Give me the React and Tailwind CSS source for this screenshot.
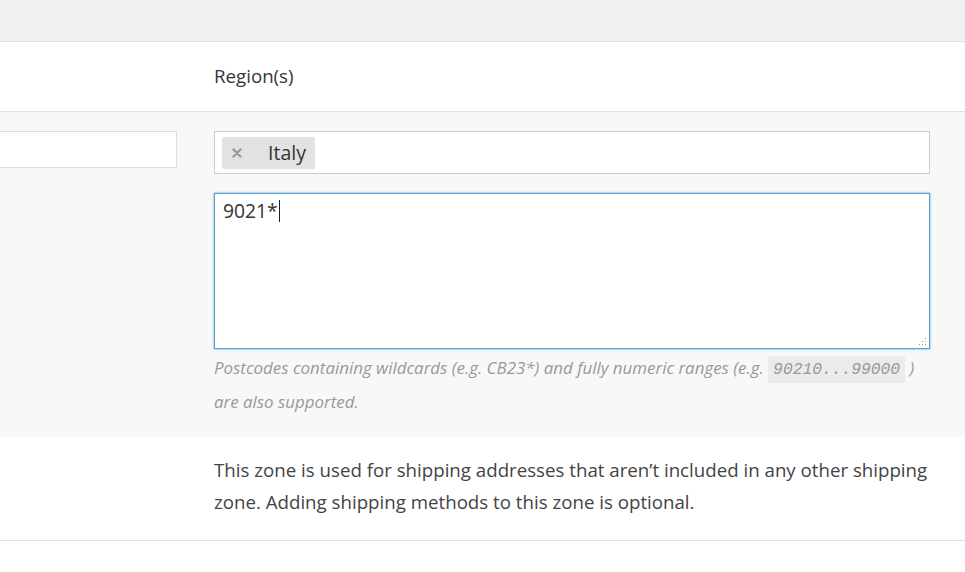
import React from 'react';

const font = { fontFamily: '"Open Sans", "Noto Sans", sans-serif' };

// little dotted grip in the textarea corner
const Grip = () => (
  <svg width="8" height="8" viewBox="0 0 8 8" className="absolute right-[2px] bottom-[2px]">
    <rect x="6" y="0" width="1" height="1" fill="#999" />
    <rect x="3" y="3" width="1" height="1" fill="#999" />
    <rect x="6" y="3" width="1" height="1" fill="#999" />
    <rect x="0" y="6" width="1" height="1" fill="#999" />
    <rect x="3" y="6" width="1" height="1" fill="#999" />
    <rect x="6" y="6" width="1" height="1" fill="#999" />
  </svg>
);

const App = () => {
  return (
    <div className="w-[965px] h-[572px] bg-white text-[#333] overflow-hidden" style={font}>
      {/* top strip */}
      <div className="h-[42px] bg-[#f1f1f1] border-b border-[#e1e1e1]" />

      {/* heading row */}
      <div className="grid grid-cols-[214px_1fr] h-[70px] border-b border-[#e1e1e1] bg-white">
        <div />
        <div className="flex items-center text-[18.7px] text-[#32373c]">Region(s)</div>
      </div>

      {/* zone name + regions */}
      <div className="grid grid-cols-[214px_1fr] bg-[#f8f8f8] pt-[19px] pb-[19px]">
        <div className="pr-[37px]">
          <div className="h-[37px] bg-white border-y border-r border-[#ddd]" />
        </div>
        <div className="pr-[35px]">
          <div className="h-[43px] bg-white border border-[#ccc] flex items-center px-[7px]">
            <div className="h-[32px] bg-[#e2e2e2] rounded-[2px] flex items-center pl-[10px] pr-[9px]">
              <svg width="10" height="10" viewBox="0 0 10 10" className="mr-[26px]">
                <path d="M1.5 1.5 L8.5 8.5 M8.5 1.5 L1.5 8.5" stroke="#999" strokeWidth="2.4" strokeLinecap="round" />
              </svg>
              <span className="text-[19.5px] text-[#333]">Italy</span>
            </div>
          </div>
          <div className="relative mt-[19px] h-[156px] bg-white border border-[#5b9dd9] shadow-[0_0_2px_rgba(30,140,190,0.8)] px-[8px] pt-[3px]">
            <div className="flex items-center text-[19.3px] text-[#333] leading-[28px]">
              <span>9021*</span>
              <span className="inline-block w-px h-[22px] bg-[#222] ml-px" />
            </div>
            <Grip />
          </div>
          <p className="mt-[3px] text-[16.9px] italic text-[#999] leading-[32px]">
            Postcodes containing wildcards (e.g. CB23*) and fully numeric ranges (e.g.{' '}
            <code
              className="bg-[#ebebeb] px-[5px] py-[4px] text-[16.3px] text-[#999]"
              style={{ fontFamily: '"Liberation Mono", monospace', fontStyle: 'italic' }}
            >
              90210...99000
            </code>
            {' '}) are also supported.
          </p>
        </div>
      </div>

      {/* rest of world note */}
      <div className="grid grid-cols-[214px_1fr] bg-white border-t border-[#fff] border-b border-b-[#e1e1e1] pt-[16px] pb-[22px]">
        <div />
        <p className="pr-[30px] text-[18.7px] leading-[32px] text-[#444]">
          This zone is used for shipping addresses that aren’t included in any other shipping zone. Adding shipping methods to this zone is optional.
        </p>
      </div>
    </div>
  );
};

export default App;
